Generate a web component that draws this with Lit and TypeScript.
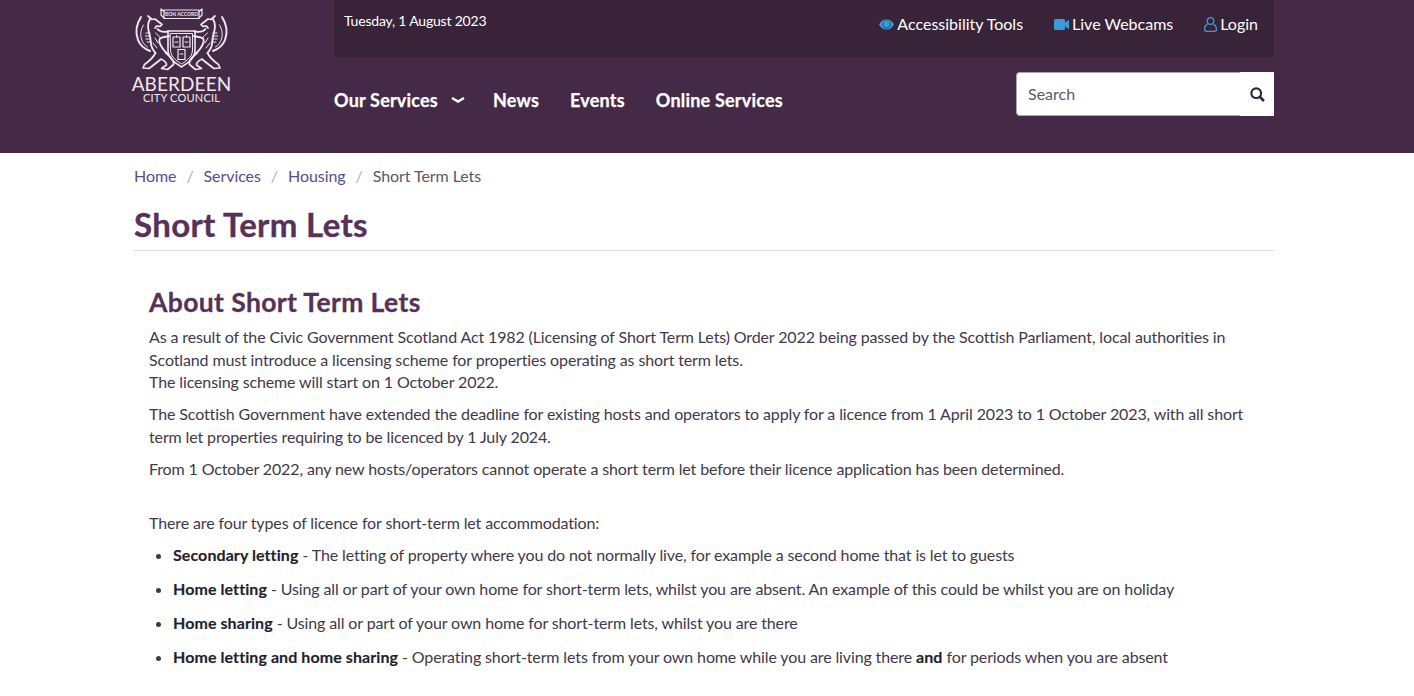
import { LitElement, html, css, svg } from "lit";
import { customElement } from "lit/decorators.js";

const griffin = svg`
  <path d="M17 11l4 3.500 3-.5 7 5.500-2 1.800-3.500-.3-1.500 2" stroke-width="1.700"/>
  <path d="M19 14c-2.500 4.500-2.500 9-.8 14 1.300 4 1.500 8 1.800 11 .3 3 2 6 4.500 9" stroke-width="1.900"/>
  <path d="M26.500 24c2.500 3 6 3.500 11 2.500M38 31c-4 1.500-7 .5-9 2.500-1.500 2 0 6 2 9 1.500 2.500 4 5 7 8" stroke-width="1.900"/>
  <path d="M24.500 28c2 2 4 3 5 5" stroke-width="1"/>
  <path d="M24.500 48c-2.500 5-6 8-11 11.500l-1.500 3.500 6 .5c4-3 8-6 12-9.500 3 1.500 6 3.500 5.500 6l-5 3.500 6 1 6-5c1-3-3-8-8-12" stroke-width="1.700"/>
  <path d="M10 12C5.500 19 4 27 7 35c2 5 6.500 9 12 11" stroke-width="2"/>
  <path d="M12.500 20c-2.500 4-3.500 9-2 14 1 3.500 3 6 6 8" stroke-width="1"/>
  <path d="M15 28h4M14.500 31h4.500M15 34h4.500M16 37h4" stroke-width="1"/>
  <path d="M24 33l3 5M22 38l4 5" stroke-width="1"/>
`;

@customElement("app-root")
export class AppRoot extends LitElement {
  static styles = css`
    :host { display: block; font-family: Lato, "Open Sans", sans-serif; color: #41394b; background: #fff; height: 696px; overflow: hidden; }
    * { box-sizing: border-box; }
    a { text-decoration: none; color: inherit; }
    header { background: #452a47; height: 153px; }
    .wrap { width: 1140px; margin: 0 0 0 134px; }
    .head { display: flex; }
    .logo { width: 200px; flex: none; padding-top: 5px; margin-left: -3px; margin-right: 3px; display: block; color: #efe9ef; text-align: center; }
    .logo-in { width: 101px; display: flex; flex-direction: column; align-items: center; }
    .logo svg { display: block; }
    .logo svg text { font-family: Lato, sans-serif; fill: #efe9ef; }
    .city { font-size: 19px; line-height: 16px; letter-spacing: 0.1px; margin-top: 1px; white-space: nowrap; }
    .council { font-size: 11px; line-height: 11px; font-weight: 400; letter-spacing: 0.2px; white-space: nowrap; }
    .right { flex: 1; min-width: 0; }
    .top { background: #392339; height: 57px; display: flex; justify-content: space-between; padding: 0 16px 0 10px; color: #fff; }
    .date { font-size: 14px; line-height: 17px; padding-top: 12px; letter-spacing: -0.2px; }
    .tools { display: flex; gap: 31px; font-size: 16px; line-height: 20px; padding-top: 14px; }
    .tools a { display: flex; align-items: center; gap: 3px; height: 20px; }
    .bar { display: flex; justify-content: space-between; align-items: flex-start; }
    nav { display: flex; font-size: 18px; font-weight: 700; color: #fff; line-height: 22px; padding-top: 32px; gap: 31px; letter-spacing: 0.2px; -webkit-text-stroke: 0.25px #fff; }
    nav .svc { display: flex; align-items: center; gap: 13px; margin-right: -3px; }
    .search { display: flex; margin-top: 15px; height: 44px; width: 258px; }
    .search .field { flex: 1; background: #fff; border: 1px solid #a9a5ad; border-right: 0; border-radius: 4px 0 0 4px; font-size: 16px; color: #5d5a66; line-height: 42px; padding-left: 11px; }
    .search .btn { width: 34px; background: #fff; display: flex; align-items: center; justify-content: center; }
    .crumbs { display: flex; font-size: 16px; line-height: 24px; padding-top: 11px; color: #5c5766; letter-spacing: -0.07px; }
    .crumbs a { color: #5a4a94; }
    .crumbs i { font-style: normal; color: #b0b0b0; padding: 0 10px; }
    h1 { font-size: 33px; line-height: 38px; font-weight: 700; color: #573258; margin: 17px 0 0; padding-bottom: 7px; border-bottom: 1px solid #ddd; letter-spacing: 0.33px; -webkit-text-stroke: 0.35px #573258; }
    .body { padding: 36px 15px 0; }
    h2 { font-size: 26.500px; line-height: 30px; font-weight: 700; color: #573258; margin: 0 0 9px; letter-spacing: 0.38px; -webkit-text-stroke: 0.3px #573258; }
    p { margin: 0 0 9.500px; font-size: 16px; line-height: 22.500px; letter-spacing: -0.125px; }
    p.gap { margin-top: 32px; margin-bottom: 8px; }
    ul { margin: 0; padding: 0 0 0 24px; font-size: 16px; line-height: 24px; letter-spacing: -0.125px; }
    li { margin-bottom: 10px; }
    b { font-weight: 700; color: #241f2d; letter-spacing: 0.08px; -webkit-text-stroke: 0.15px #241f2d; }
  `;

  render() {
    return html`
      <header>
        <div class="wrap head">
          <a class="logo" href="#">
            <span class="logo-in">
              <svg width="101" height="70" viewBox="0 0 101 70" fill="none" stroke="#efe9ef" stroke-width="1.200" stroke-linejoin="round" stroke-linecap="round">
                <path d="M33 5h35v8.500H33z"/>
                <path d="M33 6.500l-3-2.500v6l3 3M68 6.500l3-2.500v6l-3 3"/>
                <text x="50.500" y="11.300" font-size="5" text-anchor="middle" stroke="none" font-weight="700">BON ACCORD</text>
                <path d="M37 26h27v19c0 8-6 12.500-13.500 17C43 57.500 37 53 37 45z" stroke-width="1.600"/>
                <path d="M39.500 28.500h22V45c0 6-4.500 10-11 14C44 55 39.500 51 39.500 45z" stroke-width="1"/>
                <path d="M42 32h7v10h-7zM52 32h7v10h-7zM47 44.500h7v10h-7z" stroke-width="1.200"/>
                <path d="M45.500 32v-1.500M55.500 32v-1.500M44 37h3M54 37h3M49 49h3" stroke-width="1"/>
                ${griffin}
                <g transform="translate(101 0) scale(-1 1)">${griffin}</g>
              </svg>
              <span class="city">ABERDEEN</span>
              <span class="council">CITY COUNCIL</span>
            </span>
          </a>
          <div class="right">
            <div class="top">
              <div class="date">Tuesday, 1 August 2023</div>
              <div class="tools">
                <a href="#"><svg width="15" height="11" viewBox="0 0 15 11"><path fill="#3c9ad6" d="M7.500 .5C4.300 .5 1.600 2.400 0 5.500 1.600 8.600 4.300 10.500 7.500 10.500s5.900-1.900 7.500-5C13.400 2.400 10.700 .5 7.500 .5z"/><path fill="none" stroke="#392339" stroke-width=".8" d="M4.300 3.600a3.700 3.700 0 1 0 6.400 0"/><path fill="none" stroke="#2a6f9d" stroke-width=".8" d="M3.800 5.200a3.700 3.700 0 0 1 7.400 0"/></svg>Accessibility Tools</a>
                <a href="#"><svg width="15" height="11" viewBox="0 0 15 11"><path fill="#3c9ad6" d="M1.500 0h8.500A1.200 1.200 0 0 1 11 1.200V3.800L14 1.200a.6.6 0 0 1 1 .4v7.800a.6.6 0 0 1-1 .4L11 7.200v2.600A1.200 1.200 0 0 1 10 11H1.500A1.500 1.500 0 0 1 0 9.500v-8A1.500 1.500 0 0 1 1.500 0z"/></svg>Live Webcams</a>
                <a href="#"><svg width="13" height="15" viewBox="0 0 13 15" fill="none" stroke="#3c9ddb" stroke-width="1.300"><circle cx="6.500" cy="4" r="3.300"/><path d="M3.500 7.300C1.800 8 .6 9.500.6 11.500v1a1.800 1.800 0 0 0 1.800 1.800h8.200a1.800 1.800 0 0 0 1.800-1.800v-1c0-2-1.200-3.500-2.900-4.200"/></svg>Login</a>
              </div>
            </div>
            <div class="bar">
              <nav>
                <a class="svc" href="#">Our Services <svg width="14" height="8" viewBox="0 0 14 8" fill="none" stroke="#fff" stroke-width="2.500"><path d="M1 2l6 3.500L13 2"/></svg></a>
                <a href="#">News</a>
                <a href="#">Events</a>
                <a href="#">Online Services</a>
              </nav>
              <div class="search">
                <div class="field">Search</div>
                <div class="btn"><svg width="15" height="15" viewBox="0 0 14 14" fill="none" stroke="#2f2340" stroke-width="2"><circle cx="5.800" cy="5.800" r="4.500"/><path d="M9 9l4 4" stroke-width="2.500"/></svg></div>
              </div>
            </div>
          </div>
        </div>
      </header>
      <main class="wrap">
        <div class="crumbs"><a href="#">Home</a><i>/</i><a href="#">Services</a><i>/</i><a href="#">Housing</a><i>/</i><span>Short Term Lets</span></div>
        <h1>Short Term Lets</h1>
        <div class="body">
          <h2>About Short Term Lets</h2>
          <p>As a result of the Civic Government Scotland Act 1982 (Licensing of Short Term Lets) Order 2022 being passed by the Scottish Parliament, local authorities in Scotland must introduce a licensing scheme for properties operating as short term lets.<br>The licensing scheme will start on 1 October 2022.</p>
          <p>The Scottish Government have extended the deadline for existing hosts and operators to apply for a licence from 1 April 2023 to 1 October 2023, with all short term let properties requiring to be licenced by 1 July 2024.</p>
          <p>From 1 October 2022, any new hosts/operators cannot operate a short term let before their licence application has been determined.</p>
          <p class="gap">There are four types of licence for short-term let accommodation:</p>
          <ul>
            <li><b>Secondary letting</b> - The letting of property where you do not normally live, for example a second home that is let to guests</li>
            <li><b>Home letting</b> - Using all or part of your own home for short-term lets, whilst you are absent. An example of this could be whilst you are on holiday</li>
            <li><b>Home sharing</b> - Using all or part of your own home for short-term lets, whilst you are there</li>
            <li><b>Home letting and home sharing</b> - Operating short-term lets from your own home while you are living there <b>and</b> for periods when you are absent</li>
          </ul>
        </div>
      </main>
    `;
  }
}
